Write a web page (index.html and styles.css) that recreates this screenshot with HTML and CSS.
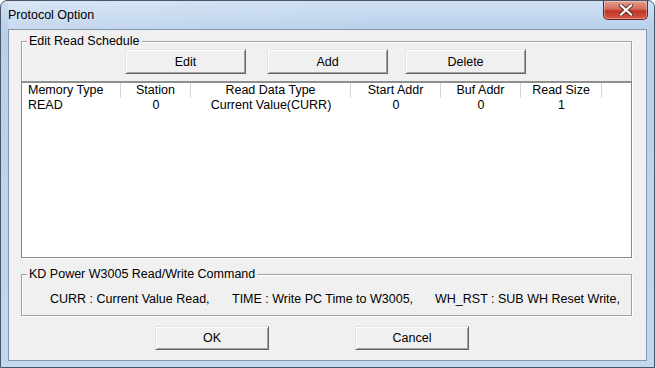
FILE: index.html
```html
<!DOCTYPE html>
<html lang="en">
<head>
<meta charset="UTF-8"/>
<title>Protocol Option</title>
<link rel="stylesheet" href="styles.css">
</head>
<body>
<div class="window">
  <div class="titlebar">
    <span class="title">Protocol Option</span>
    <button class="close" aria-label="Close">
      <svg width="14" height="12" viewBox="0 0 14 12"><path d="M2 1.5 L12 10.5 M12 1.5 L2 10.5" stroke="#5a2a26" stroke-width="4" stroke-linecap="square"/><path d="M2 1.5 L12 10.5 M12 1.5 L2 10.5" stroke="#fff" stroke-width="2.2" stroke-linecap="square"/></svg>
    </button>
  </div>
  <div class="client">
    <div class="group sched">
      <span class="legend">Edit Read Schedule</span>
      <div class="toolbar">
        <button class="btn btn-edit">Edit</button>
        <button class="btn btn-add">Add</button>
        <button class="btn btn-del">Delete</button>
      </div>
      <div class="list">
        <div class="row head">
          <span class="c1 left">Memory Type</span>
          <span class="c2">Station</span>
          <span class="c3">Read Data Type</span>
          <span class="c4">Start Addr</span>
          <span class="c5">Buf Addr</span>
          <span class="c6">Read Size</span>
          <span class="c7"></span>
        </div>
        <div class="row">
          <span class="c1 left">READ</span>
          <span class="c2">0</span>
          <span class="c3">Current Value(CURR)</span>
          <span class="c4">0</span>
          <span class="c5">0</span>
          <span class="c6">1</span>
        </div>
      </div>
    </div>
    <div class="group cmds">
      <span class="legend">KD Power W3005 Read/Write Command</span>
      <p class="cmdline"><span class="cmd1">CURR : Current Value Read,</span><span class="cmd2">TIME : Write PC Time to W3005,</span><span>WH_RST : SUB WH Reset Write,</span></p>
    </div>
    <div class="actions">
      <button class="btn btn-ok">OK</button>
      <button class="btn btn-cancel">Cancel</button>
    </div>
  </div>
</div>
</body>
</html>
```

FILE: styles.css
```css
*{box-sizing:border-box;margin:0;padding:0}
body{width:655px;height:368px;overflow:hidden;background:#fff;font-family:'Liberation Sans',Arial,sans-serif;font-size:12.5px;color:#000}
.window{width:655px;height:368px;border:1px solid #4a5668;border-radius:7px 7px 0 0;background:linear-gradient(180deg,#cfe0f3 0,#b9d0eb 28px,#c3d7ee 100%);padding:0 7px 6px 7px;display:flex;flex-direction:column}
.titlebar{height:28px;display:flex;align-items:flex-start;justify-content:space-between;background:linear-gradient(90deg,rgba(255,255,255,0.2),rgba(255,255,255,0) 60%)}
.title{font-size:12.5px;margin-top:7px;color:#000}
.close{width:45px;height:19px;margin-right:-1px;border:1px solid #5e2a25;border-top:none;border-radius:0 0 5px 5px;background:linear-gradient(180deg,#e6a093 0,#d66a58 45%,#bf3526 55%,#d45a44 100%);display:flex;align-items:center;justify-content:center;box-shadow:inset 0 0 0 1px rgba(255,255,255,0.35)}
.client{flex:1;background:#f0f0f0;border:1px solid #8596ab;padding:11px 14px 0 12px;display:flex;flex-direction:column}
.group{position:relative;border:1px solid #a0a0a0;box-shadow:inset 1px 1px 0 #fff,1px 1px 0 #fff}
.legend{position:absolute;top:-8px;left:5px;padding:0 2px;background:#f0f0f0;line-height:15px}
.sched{height:217px;display:flex;flex-direction:column}
.toolbar{display:flex;padding:7px 0 0 103px;height:39px}
.btn{height:25px;font-family:inherit;font-size:12.5px;color:#000;background:#f0f0f0;border:1px solid;border-color:#e3e3e3 #646464 #646464 #e3e3e3;box-shadow:inset 1px 1px 0 #fff,inset -1px -1px 0 #a0a0a0}
.btn-edit{width:121px}
.btn-add{width:121px;margin-left:21px}
.btn-del{width:121px;margin-left:17px}
.list{flex:1;margin:0 -1px -1px -1px;background:#fff;border:1px solid #828790;border-top:2px solid #8e8f8f}
.row{display:flex;height:15px;line-height:15px}
.row span{text-align:center;flex:none}
.row .left{text-align:left;padding-left:6px}
.head span{border-right:1px solid #d5d5d5}
.head .c7{border-right:none}
.c1{width:99px}
.c2{width:70px}
.c3{width:160px}
.c4{width:90px}
.c5{width:80px}
.c6{width:81px}
.c7{flex:1}
.cmds{margin-top:16px;height:42px;display:flex;align-items:center}
.cmdline{padding:7px 0 0 28px;white-space:nowrap}
.cmd1{display:inline-block;width:182px}
.cmd2{display:inline-block;width:203px}
.actions{display:flex;padding:10px 0 0 134px}
.btn-ok,.btn-cancel{width:114px;height:24px}
.btn-cancel{margin-left:86px}
```
